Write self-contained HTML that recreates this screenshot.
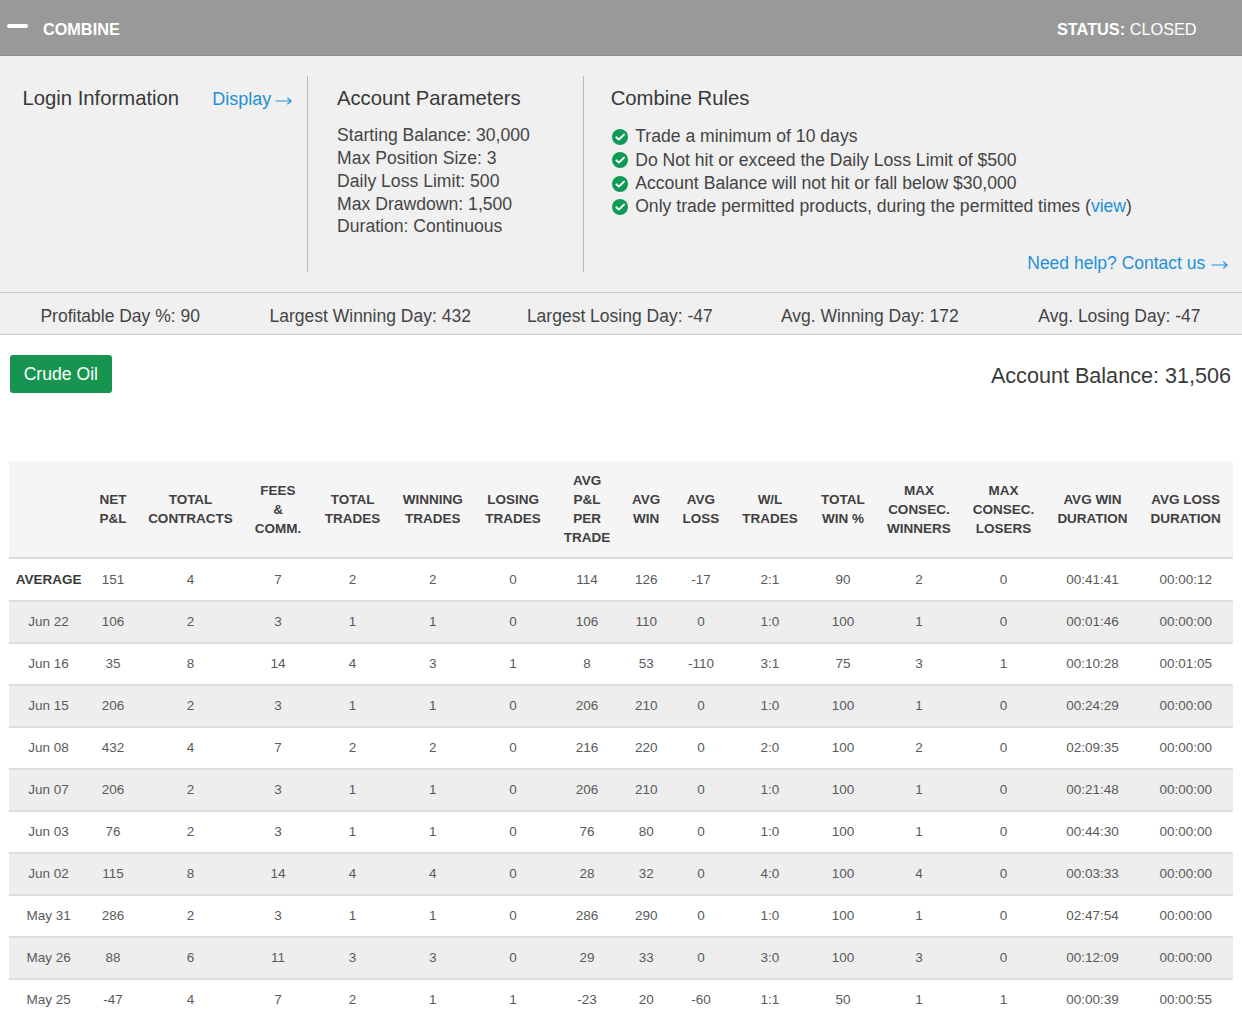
<!DOCTYPE html>
<html><head><meta charset="utf-8"><style>
html,body{margin:0;padding:0;}
body{width:1242px;height:1020px;overflow:hidden;position:relative;background:#fff;font-family:"Liberation Sans",sans-serif;}
.t{position:absolute;white-space:nowrap;}
.b{position:absolute;}
a{color:#1e90d8;text-decoration:none;}
</style></head><body>
<div class="b" style="left:0;top:0;width:1242px;height:55px;background:#999999;border-bottom:1px solid #8a8a8a;"></div>
<div class="b" style="left:6.5px;top:23.8px;width:21px;height:4.2px;background:#fff;border-radius:2px;"></div>
<div class="t" style="left:42.90px;top:20.70px;font-size:16.3px;line-height:16.3px;color:#fff;font-weight:bold;">COMBINE</div>
<div class="t" style="left:1057.00px;top:20.70px;font-size:16.3px;line-height:16.3px;color:#fff;font-weight:normal;"><b>STATUS:</b> CLOSED</div>
<div class="b" style="left:0;top:56px;width:1242px;height:236px;background:#f0f0f0;border-bottom:1px solid #cccccc;"></div>
<div class="b" style="left:307px;top:76px;width:1px;height:196px;background:#b9b9b9;"></div>
<div class="b" style="left:583px;top:76px;width:1px;height:196px;background:#b9b9b9;"></div>
<div class="t" style="left:22.40px;top:88.32px;font-size:20.3px;line-height:20.3px;color:#383838;font-weight:normal;">Login Information</div>
<div class="t" style="left:212.30px;top:90.26px;font-size:18px;line-height:18px;color:#1e90d8;font-weight:normal;">Display</div>
<div class="b" style="left:275.2px;top:96.5px;width:17px;height:8px;"><svg width="17" height="8" viewBox="0 0 17 8" style="position:absolute;left:0;top:0"><path d="M0.5 4.0 H16.2 M12.4 0.7000000000000002 L16.2 4.0 L12.4 7.3" stroke="#1e90d8" stroke-width="1.15" fill="none"/></svg></div>
<div class="t" style="left:336.90px;top:88.42px;font-size:20.3px;line-height:20.3px;color:#383838;font-weight:normal;">Account Parameters</div>
<div class="t" style="left:337.10px;top:127.10px;font-size:17.6px;line-height:17.6px;color:#454545;font-weight:normal;">Starting Balance: 30,000</div>
<div class="t" style="left:337.10px;top:150.00px;font-size:17.6px;line-height:17.6px;color:#454545;font-weight:normal;">Max Position Size: 3</div>
<div class="t" style="left:337.10px;top:172.80px;font-size:17.6px;line-height:17.6px;color:#454545;font-weight:normal;">Daily Loss Limit: 500</div>
<div class="t" style="left:337.10px;top:195.70px;font-size:17.6px;line-height:17.6px;color:#454545;font-weight:normal;">Max Drawdown: 1,500</div>
<div class="t" style="left:337.10px;top:217.50px;font-size:17.6px;line-height:17.6px;color:#454545;font-weight:normal;">Duration: Continuous</div>
<div class="t" style="left:610.70px;top:88.02px;font-size:20.3px;line-height:20.3px;color:#383838;font-weight:normal;">Combine Rules</div>
<div class="b" style="left:612.3px;top:129.00px;width:16px;height:16px;"><svg width="16" height="16" viewBox="0 0 16 16"><circle cx="8" cy="8" r="8" fill="#119a56"/><path d="M4.3 8.3 L6.8 10.6 L12 5.6" stroke="#fff" stroke-width="1.9" fill="none" stroke-linecap="round" stroke-linejoin="round"/></svg></div>
<div class="t" style="left:635.20px;top:128.20px;font-size:17.6px;line-height:17.6px;color:#444;font-weight:normal;">Trade a minimum of 10 days</div>
<div class="b" style="left:612.3px;top:152.30px;width:16px;height:16px;"><svg width="16" height="16" viewBox="0 0 16 16"><circle cx="8" cy="8" r="8" fill="#119a56"/><path d="M4.3 8.3 L6.8 10.6 L12 5.6" stroke="#fff" stroke-width="1.9" fill="none" stroke-linecap="round" stroke-linejoin="round"/></svg></div>
<div class="t" style="left:635.20px;top:151.50px;font-size:17.6px;line-height:17.6px;color:#444;font-weight:normal;">Do Not hit or exceed the Daily Loss Limit of $500</div>
<div class="b" style="left:612.3px;top:175.60px;width:16px;height:16px;"><svg width="16" height="16" viewBox="0 0 16 16"><circle cx="8" cy="8" r="8" fill="#119a56"/><path d="M4.3 8.3 L6.8 10.6 L12 5.6" stroke="#fff" stroke-width="1.9" fill="none" stroke-linecap="round" stroke-linejoin="round"/></svg></div>
<div class="t" style="left:635.20px;top:174.80px;font-size:17.6px;line-height:17.6px;color:#444;font-weight:normal;">Account Balance will not hit or fall below $30,000</div>
<div class="b" style="left:612.3px;top:198.90px;width:16px;height:16px;"><svg width="16" height="16" viewBox="0 0 16 16"><circle cx="8" cy="8" r="8" fill="#119a56"/><path d="M4.3 8.3 L6.8 10.6 L12 5.6" stroke="#fff" stroke-width="1.9" fill="none" stroke-linecap="round" stroke-linejoin="round"/></svg></div>
<div class="t" style="left:635.20px;top:198.10px;font-size:17.6px;line-height:17.6px;color:#444;font-weight:normal;">Only trade permitted products, during the permitted times (<a>view</a>)</div>
<div class="t" style="left:805.30px;width:400px;text-align:right;top:255.29px;font-size:17.5px;line-height:17.5px;color:#1e90d8;font-weight:normal;">Need help? Contact us</div>
<div class="b" style="left:1210.8px;top:260.6px;width:17px;height:8px;"><svg width="17" height="8" viewBox="0 0 17 8" style="position:absolute;left:0;top:0"><path d="M0.5 4.0 H16.2 M12.4 0.7000000000000002 L16.2 4.0 L12.4 7.3" stroke="#1e90d8" stroke-width="1.15" fill="none"/></svg></div>
<div class="b" style="left:0;top:293px;width:1242px;height:40.5px;background:#f0f0f0;border-bottom:1.5px solid #c8c8c8;"></div>
<div class="t" style="left:-29.80px;width:300px;text-align:center;top:308.19px;font-size:17.5px;line-height:17.5px;color:#444;font-weight:normal;">Profitable Day %: 90</div>
<div class="t" style="left:220.20px;width:300px;text-align:center;top:308.19px;font-size:17.5px;line-height:17.5px;color:#444;font-weight:normal;">Largest Winning Day: 432</div>
<div class="t" style="left:469.80px;width:300px;text-align:center;top:308.19px;font-size:17.5px;line-height:17.5px;color:#444;font-weight:normal;">Largest Losing Day: -47</div>
<div class="t" style="left:719.80px;width:300px;text-align:center;top:308.19px;font-size:17.5px;line-height:17.5px;color:#444;font-weight:normal;">Avg. Winning Day: 172</div>
<div class="t" style="left:969.40px;width:300px;text-align:center;top:308.19px;font-size:17.5px;line-height:17.5px;color:#444;font-weight:normal;">Avg. Losing Day: -47</div>
<div class="b" style="left:9.5px;top:355px;width:102.5px;height:37.5px;background:#17944f;border-radius:3px;"></div>
<div class="t" style="left:10.80px;width:100px;text-align:center;top:366.10px;font-size:17.6px;line-height:17.6px;color:#fff;font-weight:normal;">Crude Oil</div>
<div class="t" style="left:831.00px;width:400px;text-align:right;top:365.12px;font-size:21.6px;line-height:21.6px;color:#3a3a3a;font-weight:normal;">Account Balance: 31,506</div>
<div class="b" style="left:9.2px;top:460.5px;width:1223.6px;height:97.5px;background:#f5f5f5;"></div>
<div class="b" style="left:9.2px;top:557px;width:1223.6px;height:2px;background:#dcdcdc;"></div>
<div class="t" style="left:-11.40px;width:120px;text-align:center;top:499.90px;font-size:13.5px;line-height:19px;font-weight:bold;color:#404040;"></div>
<div class="t" style="left:53.00px;width:120px;text-align:center;top:490.40px;font-size:13.5px;line-height:19px;font-weight:bold;color:#404040;">NET<br>P&amp;L</div>
<div class="t" style="left:130.50px;width:120px;text-align:center;top:490.40px;font-size:13.5px;line-height:19px;font-weight:bold;color:#404040;">TOTAL<br>CONTRACTS</div>
<div class="t" style="left:218.00px;width:120px;text-align:center;top:480.90px;font-size:13.5px;line-height:19px;font-weight:bold;color:#404040;">FEES<br>&amp;<br>COMM.</div>
<div class="t" style="left:292.60px;width:120px;text-align:center;top:490.40px;font-size:13.5px;line-height:19px;font-weight:bold;color:#404040;">TOTAL<br>TRADES</div>
<div class="t" style="left:372.70px;width:120px;text-align:center;top:490.40px;font-size:13.5px;line-height:19px;font-weight:bold;color:#404040;">WINNING<br>TRADES</div>
<div class="t" style="left:453.10px;width:120px;text-align:center;top:490.40px;font-size:13.5px;line-height:19px;font-weight:bold;color:#404040;">LOSING<br>TRADES</div>
<div class="t" style="left:527.10px;width:120px;text-align:center;top:471.40px;font-size:13.5px;line-height:19px;font-weight:bold;color:#404040;">AVG<br>P&amp;L<br>PER<br>TRADE</div>
<div class="t" style="left:586.20px;width:120px;text-align:center;top:490.40px;font-size:13.5px;line-height:19px;font-weight:bold;color:#404040;">AVG<br>WIN</div>
<div class="t" style="left:641.00px;width:120px;text-align:center;top:490.40px;font-size:13.5px;line-height:19px;font-weight:bold;color:#404040;">AVG<br>LOSS</div>
<div class="t" style="left:710.00px;width:120px;text-align:center;top:490.40px;font-size:13.5px;line-height:19px;font-weight:bold;color:#404040;">W/L<br>TRADES</div>
<div class="t" style="left:782.90px;width:120px;text-align:center;top:490.40px;font-size:13.5px;line-height:19px;font-weight:bold;color:#404040;">TOTAL<br>WIN %</div>
<div class="t" style="left:858.90px;width:120px;text-align:center;top:480.90px;font-size:13.5px;line-height:19px;font-weight:bold;color:#404040;">MAX<br>CONSEC.<br>WINNERS</div>
<div class="t" style="left:943.60px;width:120px;text-align:center;top:480.90px;font-size:13.5px;line-height:19px;font-weight:bold;color:#404040;">MAX<br>CONSEC.<br>LOSERS</div>
<div class="t" style="left:1032.50px;width:120px;text-align:center;top:490.40px;font-size:13.5px;line-height:19px;font-weight:bold;color:#404040;">AVG WIN<br>DURATION</div>
<div class="t" style="left:1125.70px;width:120px;text-align:center;top:490.40px;font-size:13.5px;line-height:19px;font-weight:bold;color:#404040;">AVG LOSS<br>DURATION</div>
<div class="t" style="left:-11.40px;width:120px;text-align:center;top:572.97px;font-size:13.5px;line-height:13.5px;color:#3a3a3a;font-weight:bold;">AVERAGE</div>
<div class="t" style="left:53.00px;width:120px;text-align:center;top:572.97px;font-size:13.5px;line-height:13.5px;color:#5a5a5a;font-weight:normal;">151</div>
<div class="t" style="left:130.50px;width:120px;text-align:center;top:572.97px;font-size:13.5px;line-height:13.5px;color:#5a5a5a;font-weight:normal;">4</div>
<div class="t" style="left:218.00px;width:120px;text-align:center;top:572.97px;font-size:13.5px;line-height:13.5px;color:#5a5a5a;font-weight:normal;">7</div>
<div class="t" style="left:292.60px;width:120px;text-align:center;top:572.97px;font-size:13.5px;line-height:13.5px;color:#5a5a5a;font-weight:normal;">2</div>
<div class="t" style="left:372.70px;width:120px;text-align:center;top:572.97px;font-size:13.5px;line-height:13.5px;color:#5a5a5a;font-weight:normal;">2</div>
<div class="t" style="left:453.10px;width:120px;text-align:center;top:572.97px;font-size:13.5px;line-height:13.5px;color:#5a5a5a;font-weight:normal;">0</div>
<div class="t" style="left:527.10px;width:120px;text-align:center;top:572.97px;font-size:13.5px;line-height:13.5px;color:#5a5a5a;font-weight:normal;">114</div>
<div class="t" style="left:586.20px;width:120px;text-align:center;top:572.97px;font-size:13.5px;line-height:13.5px;color:#5a5a5a;font-weight:normal;">126</div>
<div class="t" style="left:641.00px;width:120px;text-align:center;top:572.97px;font-size:13.5px;line-height:13.5px;color:#5a5a5a;font-weight:normal;">-17</div>
<div class="t" style="left:710.00px;width:120px;text-align:center;top:572.97px;font-size:13.5px;line-height:13.5px;color:#5a5a5a;font-weight:normal;">2:1</div>
<div class="t" style="left:782.90px;width:120px;text-align:center;top:572.97px;font-size:13.5px;line-height:13.5px;color:#5a5a5a;font-weight:normal;">90</div>
<div class="t" style="left:858.90px;width:120px;text-align:center;top:572.97px;font-size:13.5px;line-height:13.5px;color:#5a5a5a;font-weight:normal;">2</div>
<div class="t" style="left:943.60px;width:120px;text-align:center;top:572.97px;font-size:13.5px;line-height:13.5px;color:#5a5a5a;font-weight:normal;">0</div>
<div class="t" style="left:1032.50px;width:120px;text-align:center;top:572.97px;font-size:13.5px;line-height:13.5px;color:#5a5a5a;font-weight:normal;">00:41:41</div>
<div class="t" style="left:1125.70px;width:120px;text-align:center;top:572.97px;font-size:13.5px;line-height:13.5px;color:#5a5a5a;font-weight:normal;">00:00:12</div>
<div class="b" style="left:9.2px;top:600px;width:1223.6px;height:42px;background:#eeeeee;border-top:2px solid #dedede;box-sizing:border-box;"></div>
<div class="t" style="left:-11.40px;width:120px;text-align:center;top:614.97px;font-size:13.5px;line-height:13.5px;color:#5a5a5a;font-weight:normal;">Jun 22</div>
<div class="t" style="left:53.00px;width:120px;text-align:center;top:614.97px;font-size:13.5px;line-height:13.5px;color:#5a5a5a;font-weight:normal;">106</div>
<div class="t" style="left:130.50px;width:120px;text-align:center;top:614.97px;font-size:13.5px;line-height:13.5px;color:#5a5a5a;font-weight:normal;">2</div>
<div class="t" style="left:218.00px;width:120px;text-align:center;top:614.97px;font-size:13.5px;line-height:13.5px;color:#5a5a5a;font-weight:normal;">3</div>
<div class="t" style="left:292.60px;width:120px;text-align:center;top:614.97px;font-size:13.5px;line-height:13.5px;color:#5a5a5a;font-weight:normal;">1</div>
<div class="t" style="left:372.70px;width:120px;text-align:center;top:614.97px;font-size:13.5px;line-height:13.5px;color:#5a5a5a;font-weight:normal;">1</div>
<div class="t" style="left:453.10px;width:120px;text-align:center;top:614.97px;font-size:13.5px;line-height:13.5px;color:#5a5a5a;font-weight:normal;">0</div>
<div class="t" style="left:527.10px;width:120px;text-align:center;top:614.97px;font-size:13.5px;line-height:13.5px;color:#5a5a5a;font-weight:normal;">106</div>
<div class="t" style="left:586.20px;width:120px;text-align:center;top:614.97px;font-size:13.5px;line-height:13.5px;color:#5a5a5a;font-weight:normal;">110</div>
<div class="t" style="left:641.00px;width:120px;text-align:center;top:614.97px;font-size:13.5px;line-height:13.5px;color:#5a5a5a;font-weight:normal;">0</div>
<div class="t" style="left:710.00px;width:120px;text-align:center;top:614.97px;font-size:13.5px;line-height:13.5px;color:#5a5a5a;font-weight:normal;">1:0</div>
<div class="t" style="left:782.90px;width:120px;text-align:center;top:614.97px;font-size:13.5px;line-height:13.5px;color:#5a5a5a;font-weight:normal;">100</div>
<div class="t" style="left:858.90px;width:120px;text-align:center;top:614.97px;font-size:13.5px;line-height:13.5px;color:#5a5a5a;font-weight:normal;">1</div>
<div class="t" style="left:943.60px;width:120px;text-align:center;top:614.97px;font-size:13.5px;line-height:13.5px;color:#5a5a5a;font-weight:normal;">0</div>
<div class="t" style="left:1032.50px;width:120px;text-align:center;top:614.97px;font-size:13.5px;line-height:13.5px;color:#5a5a5a;font-weight:normal;">00:01:46</div>
<div class="t" style="left:1125.70px;width:120px;text-align:center;top:614.97px;font-size:13.5px;line-height:13.5px;color:#5a5a5a;font-weight:normal;">00:00:00</div>
<div class="b" style="left:9.2px;top:642px;width:1223.6px;height:42px;background:#ffffff;border-top:2px solid #dedede;box-sizing:border-box;"></div>
<div class="t" style="left:-11.40px;width:120px;text-align:center;top:656.97px;font-size:13.5px;line-height:13.5px;color:#5a5a5a;font-weight:normal;">Jun 16</div>
<div class="t" style="left:53.00px;width:120px;text-align:center;top:656.97px;font-size:13.5px;line-height:13.5px;color:#5a5a5a;font-weight:normal;">35</div>
<div class="t" style="left:130.50px;width:120px;text-align:center;top:656.97px;font-size:13.5px;line-height:13.5px;color:#5a5a5a;font-weight:normal;">8</div>
<div class="t" style="left:218.00px;width:120px;text-align:center;top:656.97px;font-size:13.5px;line-height:13.5px;color:#5a5a5a;font-weight:normal;">14</div>
<div class="t" style="left:292.60px;width:120px;text-align:center;top:656.97px;font-size:13.5px;line-height:13.5px;color:#5a5a5a;font-weight:normal;">4</div>
<div class="t" style="left:372.70px;width:120px;text-align:center;top:656.97px;font-size:13.5px;line-height:13.5px;color:#5a5a5a;font-weight:normal;">3</div>
<div class="t" style="left:453.10px;width:120px;text-align:center;top:656.97px;font-size:13.5px;line-height:13.5px;color:#5a5a5a;font-weight:normal;">1</div>
<div class="t" style="left:527.10px;width:120px;text-align:center;top:656.97px;font-size:13.5px;line-height:13.5px;color:#5a5a5a;font-weight:normal;">8</div>
<div class="t" style="left:586.20px;width:120px;text-align:center;top:656.97px;font-size:13.5px;line-height:13.5px;color:#5a5a5a;font-weight:normal;">53</div>
<div class="t" style="left:641.00px;width:120px;text-align:center;top:656.97px;font-size:13.5px;line-height:13.5px;color:#5a5a5a;font-weight:normal;">-110</div>
<div class="t" style="left:710.00px;width:120px;text-align:center;top:656.97px;font-size:13.5px;line-height:13.5px;color:#5a5a5a;font-weight:normal;">3:1</div>
<div class="t" style="left:782.90px;width:120px;text-align:center;top:656.97px;font-size:13.5px;line-height:13.5px;color:#5a5a5a;font-weight:normal;">75</div>
<div class="t" style="left:858.90px;width:120px;text-align:center;top:656.97px;font-size:13.5px;line-height:13.5px;color:#5a5a5a;font-weight:normal;">3</div>
<div class="t" style="left:943.60px;width:120px;text-align:center;top:656.97px;font-size:13.5px;line-height:13.5px;color:#5a5a5a;font-weight:normal;">1</div>
<div class="t" style="left:1032.50px;width:120px;text-align:center;top:656.97px;font-size:13.5px;line-height:13.5px;color:#5a5a5a;font-weight:normal;">00:10:28</div>
<div class="t" style="left:1125.70px;width:120px;text-align:center;top:656.97px;font-size:13.5px;line-height:13.5px;color:#5a5a5a;font-weight:normal;">00:01:05</div>
<div class="b" style="left:9.2px;top:684px;width:1223.6px;height:42px;background:#eeeeee;border-top:2px solid #dedede;box-sizing:border-box;"></div>
<div class="t" style="left:-11.40px;width:120px;text-align:center;top:698.97px;font-size:13.5px;line-height:13.5px;color:#5a5a5a;font-weight:normal;">Jun 15</div>
<div class="t" style="left:53.00px;width:120px;text-align:center;top:698.97px;font-size:13.5px;line-height:13.5px;color:#5a5a5a;font-weight:normal;">206</div>
<div class="t" style="left:130.50px;width:120px;text-align:center;top:698.97px;font-size:13.5px;line-height:13.5px;color:#5a5a5a;font-weight:normal;">2</div>
<div class="t" style="left:218.00px;width:120px;text-align:center;top:698.97px;font-size:13.5px;line-height:13.5px;color:#5a5a5a;font-weight:normal;">3</div>
<div class="t" style="left:292.60px;width:120px;text-align:center;top:698.97px;font-size:13.5px;line-height:13.5px;color:#5a5a5a;font-weight:normal;">1</div>
<div class="t" style="left:372.70px;width:120px;text-align:center;top:698.97px;font-size:13.5px;line-height:13.5px;color:#5a5a5a;font-weight:normal;">1</div>
<div class="t" style="left:453.10px;width:120px;text-align:center;top:698.97px;font-size:13.5px;line-height:13.5px;color:#5a5a5a;font-weight:normal;">0</div>
<div class="t" style="left:527.10px;width:120px;text-align:center;top:698.97px;font-size:13.5px;line-height:13.5px;color:#5a5a5a;font-weight:normal;">206</div>
<div class="t" style="left:586.20px;width:120px;text-align:center;top:698.97px;font-size:13.5px;line-height:13.5px;color:#5a5a5a;font-weight:normal;">210</div>
<div class="t" style="left:641.00px;width:120px;text-align:center;top:698.97px;font-size:13.5px;line-height:13.5px;color:#5a5a5a;font-weight:normal;">0</div>
<div class="t" style="left:710.00px;width:120px;text-align:center;top:698.97px;font-size:13.5px;line-height:13.5px;color:#5a5a5a;font-weight:normal;">1:0</div>
<div class="t" style="left:782.90px;width:120px;text-align:center;top:698.97px;font-size:13.5px;line-height:13.5px;color:#5a5a5a;font-weight:normal;">100</div>
<div class="t" style="left:858.90px;width:120px;text-align:center;top:698.97px;font-size:13.5px;line-height:13.5px;color:#5a5a5a;font-weight:normal;">1</div>
<div class="t" style="left:943.60px;width:120px;text-align:center;top:698.97px;font-size:13.5px;line-height:13.5px;color:#5a5a5a;font-weight:normal;">0</div>
<div class="t" style="left:1032.50px;width:120px;text-align:center;top:698.97px;font-size:13.5px;line-height:13.5px;color:#5a5a5a;font-weight:normal;">00:24:29</div>
<div class="t" style="left:1125.70px;width:120px;text-align:center;top:698.97px;font-size:13.5px;line-height:13.5px;color:#5a5a5a;font-weight:normal;">00:00:00</div>
<div class="b" style="left:9.2px;top:726px;width:1223.6px;height:42px;background:#ffffff;border-top:2px solid #dedede;box-sizing:border-box;"></div>
<div class="t" style="left:-11.40px;width:120px;text-align:center;top:740.97px;font-size:13.5px;line-height:13.5px;color:#5a5a5a;font-weight:normal;">Jun 08</div>
<div class="t" style="left:53.00px;width:120px;text-align:center;top:740.97px;font-size:13.5px;line-height:13.5px;color:#5a5a5a;font-weight:normal;">432</div>
<div class="t" style="left:130.50px;width:120px;text-align:center;top:740.97px;font-size:13.5px;line-height:13.5px;color:#5a5a5a;font-weight:normal;">4</div>
<div class="t" style="left:218.00px;width:120px;text-align:center;top:740.97px;font-size:13.5px;line-height:13.5px;color:#5a5a5a;font-weight:normal;">7</div>
<div class="t" style="left:292.60px;width:120px;text-align:center;top:740.97px;font-size:13.5px;line-height:13.5px;color:#5a5a5a;font-weight:normal;">2</div>
<div class="t" style="left:372.70px;width:120px;text-align:center;top:740.97px;font-size:13.5px;line-height:13.5px;color:#5a5a5a;font-weight:normal;">2</div>
<div class="t" style="left:453.10px;width:120px;text-align:center;top:740.97px;font-size:13.5px;line-height:13.5px;color:#5a5a5a;font-weight:normal;">0</div>
<div class="t" style="left:527.10px;width:120px;text-align:center;top:740.97px;font-size:13.5px;line-height:13.5px;color:#5a5a5a;font-weight:normal;">216</div>
<div class="t" style="left:586.20px;width:120px;text-align:center;top:740.97px;font-size:13.5px;line-height:13.5px;color:#5a5a5a;font-weight:normal;">220</div>
<div class="t" style="left:641.00px;width:120px;text-align:center;top:740.97px;font-size:13.5px;line-height:13.5px;color:#5a5a5a;font-weight:normal;">0</div>
<div class="t" style="left:710.00px;width:120px;text-align:center;top:740.97px;font-size:13.5px;line-height:13.5px;color:#5a5a5a;font-weight:normal;">2:0</div>
<div class="t" style="left:782.90px;width:120px;text-align:center;top:740.97px;font-size:13.5px;line-height:13.5px;color:#5a5a5a;font-weight:normal;">100</div>
<div class="t" style="left:858.90px;width:120px;text-align:center;top:740.97px;font-size:13.5px;line-height:13.5px;color:#5a5a5a;font-weight:normal;">2</div>
<div class="t" style="left:943.60px;width:120px;text-align:center;top:740.97px;font-size:13.5px;line-height:13.5px;color:#5a5a5a;font-weight:normal;">0</div>
<div class="t" style="left:1032.50px;width:120px;text-align:center;top:740.97px;font-size:13.5px;line-height:13.5px;color:#5a5a5a;font-weight:normal;">02:09:35</div>
<div class="t" style="left:1125.70px;width:120px;text-align:center;top:740.97px;font-size:13.5px;line-height:13.5px;color:#5a5a5a;font-weight:normal;">00:00:00</div>
<div class="b" style="left:9.2px;top:768px;width:1223.6px;height:42px;background:#eeeeee;border-top:2px solid #dedede;box-sizing:border-box;"></div>
<div class="t" style="left:-11.40px;width:120px;text-align:center;top:782.97px;font-size:13.5px;line-height:13.5px;color:#5a5a5a;font-weight:normal;">Jun 07</div>
<div class="t" style="left:53.00px;width:120px;text-align:center;top:782.97px;font-size:13.5px;line-height:13.5px;color:#5a5a5a;font-weight:normal;">206</div>
<div class="t" style="left:130.50px;width:120px;text-align:center;top:782.97px;font-size:13.5px;line-height:13.5px;color:#5a5a5a;font-weight:normal;">2</div>
<div class="t" style="left:218.00px;width:120px;text-align:center;top:782.97px;font-size:13.5px;line-height:13.5px;color:#5a5a5a;font-weight:normal;">3</div>
<div class="t" style="left:292.60px;width:120px;text-align:center;top:782.97px;font-size:13.5px;line-height:13.5px;color:#5a5a5a;font-weight:normal;">1</div>
<div class="t" style="left:372.70px;width:120px;text-align:center;top:782.97px;font-size:13.5px;line-height:13.5px;color:#5a5a5a;font-weight:normal;">1</div>
<div class="t" style="left:453.10px;width:120px;text-align:center;top:782.97px;font-size:13.5px;line-height:13.5px;color:#5a5a5a;font-weight:normal;">0</div>
<div class="t" style="left:527.10px;width:120px;text-align:center;top:782.97px;font-size:13.5px;line-height:13.5px;color:#5a5a5a;font-weight:normal;">206</div>
<div class="t" style="left:586.20px;width:120px;text-align:center;top:782.97px;font-size:13.5px;line-height:13.5px;color:#5a5a5a;font-weight:normal;">210</div>
<div class="t" style="left:641.00px;width:120px;text-align:center;top:782.97px;font-size:13.5px;line-height:13.5px;color:#5a5a5a;font-weight:normal;">0</div>
<div class="t" style="left:710.00px;width:120px;text-align:center;top:782.97px;font-size:13.5px;line-height:13.5px;color:#5a5a5a;font-weight:normal;">1:0</div>
<div class="t" style="left:782.90px;width:120px;text-align:center;top:782.97px;font-size:13.5px;line-height:13.5px;color:#5a5a5a;font-weight:normal;">100</div>
<div class="t" style="left:858.90px;width:120px;text-align:center;top:782.97px;font-size:13.5px;line-height:13.5px;color:#5a5a5a;font-weight:normal;">1</div>
<div class="t" style="left:943.60px;width:120px;text-align:center;top:782.97px;font-size:13.5px;line-height:13.5px;color:#5a5a5a;font-weight:normal;">0</div>
<div class="t" style="left:1032.50px;width:120px;text-align:center;top:782.97px;font-size:13.5px;line-height:13.5px;color:#5a5a5a;font-weight:normal;">00:21:48</div>
<div class="t" style="left:1125.70px;width:120px;text-align:center;top:782.97px;font-size:13.5px;line-height:13.5px;color:#5a5a5a;font-weight:normal;">00:00:00</div>
<div class="b" style="left:9.2px;top:810px;width:1223.6px;height:42px;background:#ffffff;border-top:2px solid #dedede;box-sizing:border-box;"></div>
<div class="t" style="left:-11.40px;width:120px;text-align:center;top:824.97px;font-size:13.5px;line-height:13.5px;color:#5a5a5a;font-weight:normal;">Jun 03</div>
<div class="t" style="left:53.00px;width:120px;text-align:center;top:824.97px;font-size:13.5px;line-height:13.5px;color:#5a5a5a;font-weight:normal;">76</div>
<div class="t" style="left:130.50px;width:120px;text-align:center;top:824.97px;font-size:13.5px;line-height:13.5px;color:#5a5a5a;font-weight:normal;">2</div>
<div class="t" style="left:218.00px;width:120px;text-align:center;top:824.97px;font-size:13.5px;line-height:13.5px;color:#5a5a5a;font-weight:normal;">3</div>
<div class="t" style="left:292.60px;width:120px;text-align:center;top:824.97px;font-size:13.5px;line-height:13.5px;color:#5a5a5a;font-weight:normal;">1</div>
<div class="t" style="left:372.70px;width:120px;text-align:center;top:824.97px;font-size:13.5px;line-height:13.5px;color:#5a5a5a;font-weight:normal;">1</div>
<div class="t" style="left:453.10px;width:120px;text-align:center;top:824.97px;font-size:13.5px;line-height:13.5px;color:#5a5a5a;font-weight:normal;">0</div>
<div class="t" style="left:527.10px;width:120px;text-align:center;top:824.97px;font-size:13.5px;line-height:13.5px;color:#5a5a5a;font-weight:normal;">76</div>
<div class="t" style="left:586.20px;width:120px;text-align:center;top:824.97px;font-size:13.5px;line-height:13.5px;color:#5a5a5a;font-weight:normal;">80</div>
<div class="t" style="left:641.00px;width:120px;text-align:center;top:824.97px;font-size:13.5px;line-height:13.5px;color:#5a5a5a;font-weight:normal;">0</div>
<div class="t" style="left:710.00px;width:120px;text-align:center;top:824.97px;font-size:13.5px;line-height:13.5px;color:#5a5a5a;font-weight:normal;">1:0</div>
<div class="t" style="left:782.90px;width:120px;text-align:center;top:824.97px;font-size:13.5px;line-height:13.5px;color:#5a5a5a;font-weight:normal;">100</div>
<div class="t" style="left:858.90px;width:120px;text-align:center;top:824.97px;font-size:13.5px;line-height:13.5px;color:#5a5a5a;font-weight:normal;">1</div>
<div class="t" style="left:943.60px;width:120px;text-align:center;top:824.97px;font-size:13.5px;line-height:13.5px;color:#5a5a5a;font-weight:normal;">0</div>
<div class="t" style="left:1032.50px;width:120px;text-align:center;top:824.97px;font-size:13.5px;line-height:13.5px;color:#5a5a5a;font-weight:normal;">00:44:30</div>
<div class="t" style="left:1125.70px;width:120px;text-align:center;top:824.97px;font-size:13.5px;line-height:13.5px;color:#5a5a5a;font-weight:normal;">00:00:00</div>
<div class="b" style="left:9.2px;top:852px;width:1223.6px;height:42px;background:#eeeeee;border-top:2px solid #dedede;box-sizing:border-box;"></div>
<div class="t" style="left:-11.40px;width:120px;text-align:center;top:866.97px;font-size:13.5px;line-height:13.5px;color:#5a5a5a;font-weight:normal;">Jun 02</div>
<div class="t" style="left:53.00px;width:120px;text-align:center;top:866.97px;font-size:13.5px;line-height:13.5px;color:#5a5a5a;font-weight:normal;">115</div>
<div class="t" style="left:130.50px;width:120px;text-align:center;top:866.97px;font-size:13.5px;line-height:13.5px;color:#5a5a5a;font-weight:normal;">8</div>
<div class="t" style="left:218.00px;width:120px;text-align:center;top:866.97px;font-size:13.5px;line-height:13.5px;color:#5a5a5a;font-weight:normal;">14</div>
<div class="t" style="left:292.60px;width:120px;text-align:center;top:866.97px;font-size:13.5px;line-height:13.5px;color:#5a5a5a;font-weight:normal;">4</div>
<div class="t" style="left:372.70px;width:120px;text-align:center;top:866.97px;font-size:13.5px;line-height:13.5px;color:#5a5a5a;font-weight:normal;">4</div>
<div class="t" style="left:453.10px;width:120px;text-align:center;top:866.97px;font-size:13.5px;line-height:13.5px;color:#5a5a5a;font-weight:normal;">0</div>
<div class="t" style="left:527.10px;width:120px;text-align:center;top:866.97px;font-size:13.5px;line-height:13.5px;color:#5a5a5a;font-weight:normal;">28</div>
<div class="t" style="left:586.20px;width:120px;text-align:center;top:866.97px;font-size:13.5px;line-height:13.5px;color:#5a5a5a;font-weight:normal;">32</div>
<div class="t" style="left:641.00px;width:120px;text-align:center;top:866.97px;font-size:13.5px;line-height:13.5px;color:#5a5a5a;font-weight:normal;">0</div>
<div class="t" style="left:710.00px;width:120px;text-align:center;top:866.97px;font-size:13.5px;line-height:13.5px;color:#5a5a5a;font-weight:normal;">4:0</div>
<div class="t" style="left:782.90px;width:120px;text-align:center;top:866.97px;font-size:13.5px;line-height:13.5px;color:#5a5a5a;font-weight:normal;">100</div>
<div class="t" style="left:858.90px;width:120px;text-align:center;top:866.97px;font-size:13.5px;line-height:13.5px;color:#5a5a5a;font-weight:normal;">4</div>
<div class="t" style="left:943.60px;width:120px;text-align:center;top:866.97px;font-size:13.5px;line-height:13.5px;color:#5a5a5a;font-weight:normal;">0</div>
<div class="t" style="left:1032.50px;width:120px;text-align:center;top:866.97px;font-size:13.5px;line-height:13.5px;color:#5a5a5a;font-weight:normal;">00:03:33</div>
<div class="t" style="left:1125.70px;width:120px;text-align:center;top:866.97px;font-size:13.5px;line-height:13.5px;color:#5a5a5a;font-weight:normal;">00:00:00</div>
<div class="b" style="left:9.2px;top:894px;width:1223.6px;height:42px;background:#ffffff;border-top:2px solid #dedede;box-sizing:border-box;"></div>
<div class="t" style="left:-11.40px;width:120px;text-align:center;top:908.97px;font-size:13.5px;line-height:13.5px;color:#5a5a5a;font-weight:normal;">May 31</div>
<div class="t" style="left:53.00px;width:120px;text-align:center;top:908.97px;font-size:13.5px;line-height:13.5px;color:#5a5a5a;font-weight:normal;">286</div>
<div class="t" style="left:130.50px;width:120px;text-align:center;top:908.97px;font-size:13.5px;line-height:13.5px;color:#5a5a5a;font-weight:normal;">2</div>
<div class="t" style="left:218.00px;width:120px;text-align:center;top:908.97px;font-size:13.5px;line-height:13.5px;color:#5a5a5a;font-weight:normal;">3</div>
<div class="t" style="left:292.60px;width:120px;text-align:center;top:908.97px;font-size:13.5px;line-height:13.5px;color:#5a5a5a;font-weight:normal;">1</div>
<div class="t" style="left:372.70px;width:120px;text-align:center;top:908.97px;font-size:13.5px;line-height:13.5px;color:#5a5a5a;font-weight:normal;">1</div>
<div class="t" style="left:453.10px;width:120px;text-align:center;top:908.97px;font-size:13.5px;line-height:13.5px;color:#5a5a5a;font-weight:normal;">0</div>
<div class="t" style="left:527.10px;width:120px;text-align:center;top:908.97px;font-size:13.5px;line-height:13.5px;color:#5a5a5a;font-weight:normal;">286</div>
<div class="t" style="left:586.20px;width:120px;text-align:center;top:908.97px;font-size:13.5px;line-height:13.5px;color:#5a5a5a;font-weight:normal;">290</div>
<div class="t" style="left:641.00px;width:120px;text-align:center;top:908.97px;font-size:13.5px;line-height:13.5px;color:#5a5a5a;font-weight:normal;">0</div>
<div class="t" style="left:710.00px;width:120px;text-align:center;top:908.97px;font-size:13.5px;line-height:13.5px;color:#5a5a5a;font-weight:normal;">1:0</div>
<div class="t" style="left:782.90px;width:120px;text-align:center;top:908.97px;font-size:13.5px;line-height:13.5px;color:#5a5a5a;font-weight:normal;">100</div>
<div class="t" style="left:858.90px;width:120px;text-align:center;top:908.97px;font-size:13.5px;line-height:13.5px;color:#5a5a5a;font-weight:normal;">1</div>
<div class="t" style="left:943.60px;width:120px;text-align:center;top:908.97px;font-size:13.5px;line-height:13.5px;color:#5a5a5a;font-weight:normal;">0</div>
<div class="t" style="left:1032.50px;width:120px;text-align:center;top:908.97px;font-size:13.5px;line-height:13.5px;color:#5a5a5a;font-weight:normal;">02:47:54</div>
<div class="t" style="left:1125.70px;width:120px;text-align:center;top:908.97px;font-size:13.5px;line-height:13.5px;color:#5a5a5a;font-weight:normal;">00:00:00</div>
<div class="b" style="left:9.2px;top:936px;width:1223.6px;height:42px;background:#eeeeee;border-top:2px solid #dedede;box-sizing:border-box;"></div>
<div class="t" style="left:-11.40px;width:120px;text-align:center;top:950.97px;font-size:13.5px;line-height:13.5px;color:#5a5a5a;font-weight:normal;">May 26</div>
<div class="t" style="left:53.00px;width:120px;text-align:center;top:950.97px;font-size:13.5px;line-height:13.5px;color:#5a5a5a;font-weight:normal;">88</div>
<div class="t" style="left:130.50px;width:120px;text-align:center;top:950.97px;font-size:13.5px;line-height:13.5px;color:#5a5a5a;font-weight:normal;">6</div>
<div class="t" style="left:218.00px;width:120px;text-align:center;top:950.97px;font-size:13.5px;line-height:13.5px;color:#5a5a5a;font-weight:normal;">11</div>
<div class="t" style="left:292.60px;width:120px;text-align:center;top:950.97px;font-size:13.5px;line-height:13.5px;color:#5a5a5a;font-weight:normal;">3</div>
<div class="t" style="left:372.70px;width:120px;text-align:center;top:950.97px;font-size:13.5px;line-height:13.5px;color:#5a5a5a;font-weight:normal;">3</div>
<div class="t" style="left:453.10px;width:120px;text-align:center;top:950.97px;font-size:13.5px;line-height:13.5px;color:#5a5a5a;font-weight:normal;">0</div>
<div class="t" style="left:527.10px;width:120px;text-align:center;top:950.97px;font-size:13.5px;line-height:13.5px;color:#5a5a5a;font-weight:normal;">29</div>
<div class="t" style="left:586.20px;width:120px;text-align:center;top:950.97px;font-size:13.5px;line-height:13.5px;color:#5a5a5a;font-weight:normal;">33</div>
<div class="t" style="left:641.00px;width:120px;text-align:center;top:950.97px;font-size:13.5px;line-height:13.5px;color:#5a5a5a;font-weight:normal;">0</div>
<div class="t" style="left:710.00px;width:120px;text-align:center;top:950.97px;font-size:13.5px;line-height:13.5px;color:#5a5a5a;font-weight:normal;">3:0</div>
<div class="t" style="left:782.90px;width:120px;text-align:center;top:950.97px;font-size:13.5px;line-height:13.5px;color:#5a5a5a;font-weight:normal;">100</div>
<div class="t" style="left:858.90px;width:120px;text-align:center;top:950.97px;font-size:13.5px;line-height:13.5px;color:#5a5a5a;font-weight:normal;">3</div>
<div class="t" style="left:943.60px;width:120px;text-align:center;top:950.97px;font-size:13.5px;line-height:13.5px;color:#5a5a5a;font-weight:normal;">0</div>
<div class="t" style="left:1032.50px;width:120px;text-align:center;top:950.97px;font-size:13.5px;line-height:13.5px;color:#5a5a5a;font-weight:normal;">00:12:09</div>
<div class="t" style="left:1125.70px;width:120px;text-align:center;top:950.97px;font-size:13.5px;line-height:13.5px;color:#5a5a5a;font-weight:normal;">00:00:00</div>
<div class="b" style="left:9.2px;top:978px;width:1223.6px;height:42px;background:#ffffff;border-top:2px solid #dedede;box-sizing:border-box;"></div>
<div class="t" style="left:-11.40px;width:120px;text-align:center;top:992.97px;font-size:13.5px;line-height:13.5px;color:#5a5a5a;font-weight:normal;">May 25</div>
<div class="t" style="left:53.00px;width:120px;text-align:center;top:992.97px;font-size:13.5px;line-height:13.5px;color:#5a5a5a;font-weight:normal;">-47</div>
<div class="t" style="left:130.50px;width:120px;text-align:center;top:992.97px;font-size:13.5px;line-height:13.5px;color:#5a5a5a;font-weight:normal;">4</div>
<div class="t" style="left:218.00px;width:120px;text-align:center;top:992.97px;font-size:13.5px;line-height:13.5px;color:#5a5a5a;font-weight:normal;">7</div>
<div class="t" style="left:292.60px;width:120px;text-align:center;top:992.97px;font-size:13.5px;line-height:13.5px;color:#5a5a5a;font-weight:normal;">2</div>
<div class="t" style="left:372.70px;width:120px;text-align:center;top:992.97px;font-size:13.5px;line-height:13.5px;color:#5a5a5a;font-weight:normal;">1</div>
<div class="t" style="left:453.10px;width:120px;text-align:center;top:992.97px;font-size:13.5px;line-height:13.5px;color:#5a5a5a;font-weight:normal;">1</div>
<div class="t" style="left:527.10px;width:120px;text-align:center;top:992.97px;font-size:13.5px;line-height:13.5px;color:#5a5a5a;font-weight:normal;">-23</div>
<div class="t" style="left:586.20px;width:120px;text-align:center;top:992.97px;font-size:13.5px;line-height:13.5px;color:#5a5a5a;font-weight:normal;">20</div>
<div class="t" style="left:641.00px;width:120px;text-align:center;top:992.97px;font-size:13.5px;line-height:13.5px;color:#5a5a5a;font-weight:normal;">-60</div>
<div class="t" style="left:710.00px;width:120px;text-align:center;top:992.97px;font-size:13.5px;line-height:13.5px;color:#5a5a5a;font-weight:normal;">1:1</div>
<div class="t" style="left:782.90px;width:120px;text-align:center;top:992.97px;font-size:13.5px;line-height:13.5px;color:#5a5a5a;font-weight:normal;">50</div>
<div class="t" style="left:858.90px;width:120px;text-align:center;top:992.97px;font-size:13.5px;line-height:13.5px;color:#5a5a5a;font-weight:normal;">1</div>
<div class="t" style="left:943.60px;width:120px;text-align:center;top:992.97px;font-size:13.5px;line-height:13.5px;color:#5a5a5a;font-weight:normal;">1</div>
<div class="t" style="left:1032.50px;width:120px;text-align:center;top:992.97px;font-size:13.5px;line-height:13.5px;color:#5a5a5a;font-weight:normal;">00:00:39</div>
<div class="t" style="left:1125.70px;width:120px;text-align:center;top:992.97px;font-size:13.5px;line-height:13.5px;color:#5a5a5a;font-weight:normal;">00:00:55</div>
</body></html>
